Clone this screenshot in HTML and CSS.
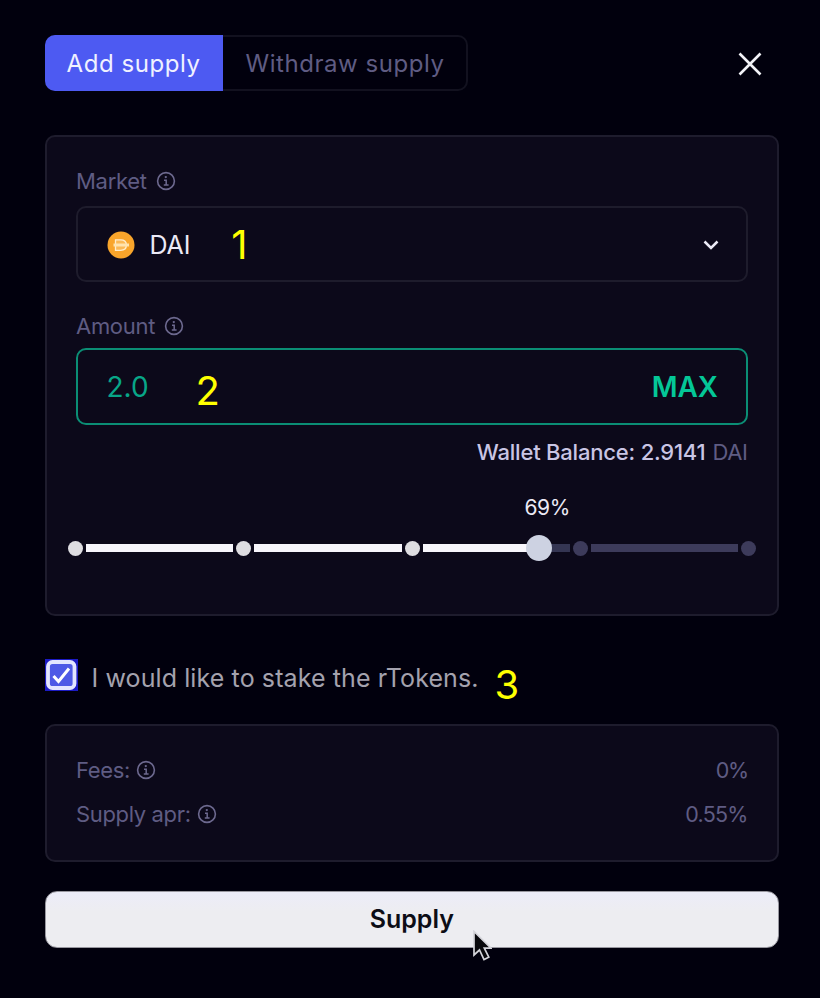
FILE: index.html
```html
<!DOCTYPE html>
<html lang="en">
<head>
<meta charset="utf-8">
<title>Supply</title>
<link rel="stylesheet" href="styles.css">
</head>
<body>
<svg class="defs" aria-hidden="true">
  <symbol id="info" viewBox="0 0 20 20">
    <circle cx="10" cy="10" r="8.4" fill="none" stroke="currentColor" stroke-width="1.6"/>
    <circle cx="9.8" cy="6.1" r="1.15" fill="currentColor"/>
    <path d="M8 9.2h2.2v4.600M7.800 14h4.800" fill="none" stroke="currentColor" stroke-width="1.5"/>
  </symbol>
</svg>
<main class="modal">
  <header class="top">
    <div class="tabs">
      <button class="tab active"><span>Add supply</span></button>
      <button class="tab"><span>Withdraw supply</span></button>
    </div>
    <svg class="close" viewBox="0 0 24 24"><path d="M1.500 1.500l21 21M22.500 1.500l-21 21" fill="none" stroke="currentColor" stroke-width="2.600"/></svg>
  </header>

  <section class="card form">
    <div class="label"><span>Market</span><svg class="info"><use href="#info"/></svg></div>
    <div class="field select">
      <svg class="coin" viewBox="0 0 28 28">
        <circle cx="14" cy="14" r="13.500" fill="#f9a52b"/>
        <path d="M8.500 8.800h5.200c3.500 0 5.700 2 5.700 5.300s-2.200 5.300-5.700 5.300H8.500z" fill="#fbb957" stroke="#ffedcc" stroke-width="1.300"/>
        <path d="M6.500 14h15.500" stroke="#ffe3ae" stroke-width="3"/>
      </svg>
      <span class="token">DAI</span>
      <span class="mark mark-1">1</span>
      <svg class="chevron" viewBox="0 0 16 10"><path d="M1.500 1.500L8 8l6.500-6.500" fill="none" stroke="currentColor" stroke-width="2.500"/></svg>
    </div>
    <div class="label second"><span>Amount</span><svg class="info"><use href="#info"/></svg></div>
    <div class="field amount">
      <span class="value">2.0</span>
      <span class="mark mark-2">2</span>
      <span class="max">MAX</span>
    </div>
    <div class="balance"><span>Wallet Balance: 2.9141</span> <span class="unit">DAI</span></div>
    <div class="percent"><span>69%</span></div>
    <div class="slider">
      <i class="dot"></i><i class="bar"></i>
      <i class="dot"></i><i class="bar"></i>
      <i class="dot"></i><i class="bar part"></i>
      <i class="dot off"></i><i class="bar off"></i>
      <i class="dot off"></i>
      <i class="thumb"></i>
    </div>
  </section>

  <div class="stake">
    <svg class="check" viewBox="0 0 33 32">
      <rect width="33" height="32" fill="#1c1bc4"/>
      <rect x="3" y="3" width="26.500" height="26" rx="4.500" fill="#4e5ae6" stroke="#e3e6ff" stroke-width="3.800"/>
      <path d="M8.500 17l5 5.500L24 9.500" fill="none" stroke="#fff" stroke-width="3"/>
    </svg>
    <span class="stake-text">I would like to stake the rTokens.</span>
    <span class="mark mark-3">3</span>
  </div>

  <section class="card fees">
    <div class="row"><span>Fees:</span><svg class="info"><use href="#info"/></svg><span class="num short">0%</span></div>
    <div class="row"><span>Supply apr:</span><svg class="info"><use href="#info"/></svg><span class="num">0.55%</span></div>
  </section>

  <div class="action">
    <button class="submit"><span>Supply</span></button>
    <svg class="cursor" viewBox="0 0 20 32"><path d="M2 1.500v23.500l5.500-5 4.500 9.500 4.800-2.300-4.500-9h6.700z" fill="#08080c" stroke="#d4d4da" stroke-width="1.700"/></svg>
  </div>
</main>
</body>
</html>
```
FILE: styles.css
```css
* { box-sizing: border-box; }
body { margin: 0; background: #01000d; font-family: Inter, "Liberation Sans", sans-serif; }
span { white-space: nowrap; }
svg { display: block; flex: none; }
button { font: inherit; border: 0; padding: 0; }
.defs { position: absolute; width: 0; height: 0; }
.modal { width: 820px; height: 998px; padding: 35px 41px 0 44.5px; overflow: hidden; }

.top { display: flex; justify-content: space-between; align-items: center; height: 57px; padding: 0 17px 1px 0; }
.tabs { display: flex; width: 423px; height: 56px; border-radius: 10px; box-shadow: inset 0 0 0 2px #12111f; overflow: hidden; }
.tab { flex: 1; background: none; color: #5f5c83; font-size: 24px; line-height: 58px; letter-spacing: .55px; }
.tab.active { flex: none; width: 178px; background: #4d5af2; color: #f0f1ff; }
.close { width: 24px; height: 24px; margin-top: 2px; color: #f2f2f7; }

.card { border: 2px solid #1e1c2d; border-radius: 10px; background: #0c091a; padding: 0 29.5px; }
.form { height: 481px; margin-top: 43px; }
.label { display: flex; align-items: center; gap: 9px; height: 30px; margin-top: 29px; color: #5f5c83; font-size: 22px; letter-spacing: -.3px; }
.label.second { margin-top: 29px; }
.info { width: 20px; height: 20px; color: #6d698f; }
.field { display: flex; align-items: center; border-radius: 10px; }
.select { height: 76px; margin-top: 10px; border: 2px solid #1e1c2c; padding: 2px 27px 0 28.5px; }
.coin { width: 28px; height: 28px; }
.token { margin-left: 15px; color: #eceaf6; font-size: 25px; letter-spacing: -.1px; }
.mark { color: #ff0; font-size: 40px; line-height: 40px; }
.mark-1 { margin-left: 41px; }
.chevron { width: 16px; height: 10px; margin-left: auto; color: #eceaf6; }
.amount { height: 77px; margin-top: 7px; border: 2px solid #0b8e75; padding: 0 27.5px 0 28.5px; }
.value { color: #08a688; font-size: 28px; }
.mark-2 { margin-left: 47px; padding-top: 9px; }
.max { margin-left: auto; color: #04c797; font-size: 28px; font-weight: 600; }
.balance { display: flex; justify-content: flex-end; gap: 7px; height: 30px; margin-top: 12px; color: #c9c5e4; font-size: 22px; line-height: 30px; font-weight: 500; letter-spacing: -.2px; }
.unit { color: #5f5c83; font-weight: 400; letter-spacing: -.4px; }
.percent { display: flex; padding-left: 448.5px; height: 30px; margin-top: 26px; color: #eceaf6; font-size: 21px; line-height: 30px; letter-spacing: -.4px; }
.slider { position: relative; display: flex; align-items: center; gap: 3px; height: 28px; margin: 11px -8.5px 0 -8px; }
.dot { width: 15px; height: 15px; border-radius: 50%; background: #dedde1; flex: none; }
.bar { flex: 1; height: 8px; background: #f8f6fc; }
.dot.off, .bar.off { background: #3d3b5b; }
.bar.part { background: linear-gradient(to right, #f8f6fc 76%, #343552 76%); }
.thumb { position: absolute; left: 68.5%; top: 1px; width: 26px; height: 26px; margin-left: -13px; border-radius: 50%; background: #cdd2e2; }

.stake { display: flex; align-items: center; height: 32px; margin: 43px 0 0 0; color: #a4a2ae; font-size: 25px; letter-spacing: .1px; }
.check { width: 33px; height: 32px; }
.stake-text { margin-left: 14px; padding-top: 5px; }
.mark-3 { margin-left: 16px; padding-top: 20px; }

.fees { height: 138px; margin-top: 33px; padding-top: 22px; }
.row { display: flex; align-items: center; gap: 6px; height: 44px; color: #5f5c83; font-size: 22px; letter-spacing: -.35px; }
.num { margin-left: auto; font-size: 21.5px; letter-spacing: -.8px; }
.num.short { letter-spacing: -1.5px; }

.action { position: relative; margin-top: 29px; }
.submit { display: block; width: 100%; height: 57px; padding-bottom: 2px; border: 1px solid #98979f; border-radius: 12px; background: linear-gradient(#ececf9, #ededf1 35%); color: #0c0d16; font-size: 25px; font-weight: 600; }
.cursor { position: absolute; left: 427.5px; top: 39px; width: 20px; height: 32px; }
```
